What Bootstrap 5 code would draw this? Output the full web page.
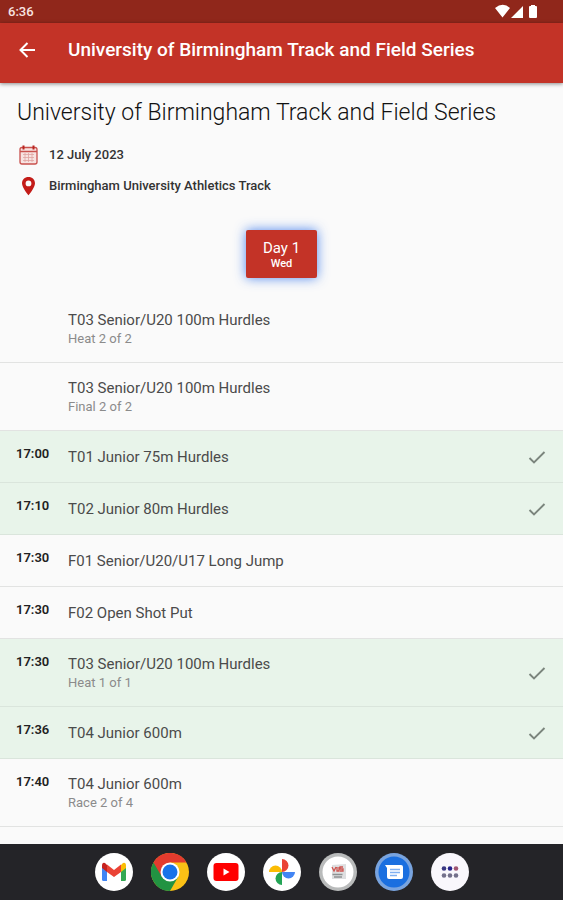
<!DOCTYPE html>
<html lang="en">
<head>
<meta charset="utf-8">
<meta name="viewport" content="width=device-width, initial-scale=1">
<title>University of Birmingham Track and Field Series</title>
<link href="https://cdn.jsdelivr.net/npm/bootstrap@5.3.0/dist/css/bootstrap.min.css" rel="stylesheet">
<style>
body{font-family:Roboto,"Liberation Sans",sans-serif;background:#fafafa;color:#212121}
.status{background:#90271b;height:23px;font-size:13px;font-weight:500;color:#f8e4e1;padding:2px 24px 0 8px}
.appbar{background:#c33327;height:60px;padding:0 16px 6px 16px;box-shadow:0 1px 4px rgba(0,0,0,.45)}
.back{width:52px;height:32px;padding:0 0 0 2px;color:#fff;text-align:left;line-height:0}
.bar-title{font-size:19px;line-height:24px;font-weight:500;color:#fff}
.intro{padding:16px 17px 0}
.event-title{font-size:23px;line-height:28px;font-weight:300;margin:0 0 12px;color:#111}
.fact{height:31px;font-size:13px;font-weight:500;gap:10px;color:#333}
.fact svg{width:22px;height:22px}
.day{width:71px;height:48px;border-radius:2px;background:#c33327;color:#fff;box-shadow:0 0 12px rgba(50,115,235,.85);font-size:15px;line-height:17px;padding:2px 0 0;border:0}
.day small{font-size:11px;line-height:14px;font-weight:500}
.day-strip{padding:29px 0 17px}
.event{min-height:52px;padding:0 16px;border-bottom:1px solid #e2e3e2;background:#fafafa}
.event.two{min-height:68px}
.event.done{background:#e8f4ea;border-color:#dae5dc}
.time{width:52px;font-size:13px;line-height:16px;font-weight:600;padding-top:15px}
.name{font-size:15px;line-height:20px;color:#4b4b4b}
.phase{font-size:13px;line-height:18px;color:#8b8b8b}
.tick{width:20px;height:20px;color:#7b857d}
.dock{background:#242428;height:56px;gap:18px}
.app{width:38px;height:38px;line-height:0}
.app svg{width:38px;height:38px}
</style>
<script src="https://cdn.jsdelivr.net/npm/bootstrap@5.3.0/dist/js/bootstrap.bundle.min.js"></script>
</head>
<body>
<svg class="d-none"><symbol id="check" viewBox="0 0 20 20"><path d="M2.500 11l4.500 4.500L17.500 5" fill="none" stroke="currentColor" stroke-width="1.900"/></symbol></svg>
<div class="d-flex flex-column min-vh-100">
<header>
<div class="status d-flex justify-content-between"><span>6:36</span>
<svg width="44" height="18" viewBox="0 0 44 18" fill="#fff" aria-hidden="true"><path d="M0 6Q8-.5 15 6L7.500 15.500zM28 4v12H16zM34 5q0-1 1-1h1V3h4v1h1q1 0 1 1v10q0 1-1 1h-6q-1 0-1-1z"/></svg></div>
<nav class="appbar d-flex align-items-center">
<button class="btn back border-0" aria-label="Back"><svg width="18" height="18" viewBox="0 0 18 18" fill="none" stroke="#fff" stroke-width="2"><path d="M17 9H3M9.500 2L2.500 9l7 7"/></svg></button>
<div class="bar-title">University of Birmingham Track and Field Series</div>
</nav>
</header>
<main class="flex-grow-1">
<section class="intro">
<h1 class="event-title">University of Birmingham Track and Field Series</h1>
<div class="fact d-flex align-items-center"><svg viewBox="0 0 22 22" fill="none" stroke="#c9524e" aria-hidden="true"><rect x="3" y="3.500" width="17" height="16.500" rx="2" fill="#f7e3e1" stroke-width="1.300"/><path d="M3 7.500h17" stroke-width="1.500"/><path d="M6.500 1.500v4M16.500 1.500v4" stroke="#b92520" stroke-width="2"/><path d="M6 10.500h11M6 13.500h11M6 16.500h11M8 9v9M11.500 9v9M15 9v9" stroke="#dfa5a1" stroke-width=".8"/></svg><span>12 July 2023</span></div>
<div class="fact d-flex align-items-center"><svg viewBox="0 0 22 22" aria-hidden="true"><path fill="#c31c18" fill-rule="evenodd" d="M11.500 2C7.700 2 5 4.700 5 8.300c0 4.500 6.500 12 6.500 12S18 12.800 18 8.300C18 4.700 15.300 2 11.500 2zm0 3.500a2.900 2.900 0 1 1 0 5.800 2.900 2.900 0 0 1 0-5.800z"/></svg><span>Birmingham University Athletics Track</span></div>
</section>
<div class="day-strip d-flex justify-content-center"><button class="btn day d-flex flex-column align-items-center justify-content-center">Day 1<small>Wed</small></button></div>
<section>
<div class="event two d-flex"><div class="time"></div><div class="align-self-center flex-grow-1"><div class="name">T03 Senior/U20 100m Hurdles</div><div class="phase">Heat 2 of 2</div></div></div>
<div class="event two d-flex"><div class="time"></div><div class="align-self-center flex-grow-1"><div class="name">T03 Senior/U20 100m Hurdles</div><div class="phase">Final 2 of 2</div></div></div>
<div class="event done d-flex"><div class="time">17:00</div><div class="align-self-center flex-grow-1"><div class="name">T01 Junior 75m Hurdles</div></div><svg class="tick align-self-center" role="img" aria-label="Done"><use href="#check"/></svg></div>
<div class="event done d-flex"><div class="time">17:10</div><div class="align-self-center flex-grow-1"><div class="name">T02 Junior 80m Hurdles</div></div><svg class="tick align-self-center" role="img" aria-label="Done"><use href="#check"/></svg></div>
<div class="event d-flex"><div class="time">17:30</div><div class="align-self-center flex-grow-1"><div class="name">F01 Senior/U20/U17 Long Jump</div></div></div>
<div class="event d-flex"><div class="time">17:30</div><div class="align-self-center flex-grow-1"><div class="name">F02 Open Shot Put</div></div></div>
<div class="event two done d-flex"><div class="time">17:30</div><div class="align-self-center flex-grow-1"><div class="name">T03 Senior/U20 100m Hurdles</div><div class="phase">Heat 1 of 1</div></div><svg class="tick align-self-center" role="img" aria-label="Done"><use href="#check"/></svg></div>
<div class="event done d-flex"><div class="time">17:36</div><div class="align-self-center flex-grow-1"><div class="name">T04 Junior 600m</div></div><svg class="tick align-self-center" role="img" aria-label="Done"><use href="#check"/></svg></div>
<div class="event two d-flex"><div class="time">17:40</div><div class="align-self-center flex-grow-1"><div class="name">T04 Junior 600m</div><div class="phase">Race 2 of 4</div></div></div>
</section>
</main>
<footer class="dock d-flex justify-content-center align-items-center">
<a class="app" href="#" aria-label="Gmail"><svg viewBox="0 0 38 38"><circle cx="19" cy="19" r="19" fill="#fff"/><path fill="#4285f4" d="M7 14l5 4v10H8.500Q7 28 7 26.500z"/><path fill="#34a853" d="M31 14l-5 4v10h3.500Q31 28 31 26.500z"/><path fill="#fbbc04" d="M26 12l2-2q3-1 3 3v2l-5 4z"/><path fill="#c5221f" d="M12 12l-2-2q-3-1-3 3v2l5 4z"/><path fill="#ea4335" d="M12 11.500l7 5.500 7-5.500V19l-7 5-7-5z"/></svg></a>
<a class="app" href="#" aria-label="Chrome"><svg viewBox="0 0 38 38"><circle cx="19" cy="19" r="19" fill="#fbc116"/><path fill="#229342" d="M2.500 9.500A19 19 0 0 0 19 38l8.200-14.200L19 19z"/><path fill="#e33b2e" d="M2.500 9.500A19 19 0 0 1 35.500 9.500H19v9.500l-8.200 4.700z"/><circle cx="19" cy="19" r="9.500" fill="#fff"/><circle cx="19" cy="19" r="7.500" fill="#1a73e8"/></svg></a>
<a class="app" href="#" aria-label="YouTube"><svg viewBox="0 0 38 38"><circle cx="19" cy="19" r="19" fill="#fff"/><rect x="6.500" y="10" width="25" height="18" rx="3" fill="#f00"/><path d="M16.500 15.500v7l6-3.500z" fill="#fff"/></svg></a>
<a class="app" href="#" aria-label="Photos"><svg viewBox="0 0 38 38"><circle cx="19" cy="19" r="19" fill="#fff"/><path fill="#ea4335" d="M19 6a6.500 6.500 0 0 1 0 13z"/><path fill="#4285f4" d="M32 19a6.500 6.500 0 0 1-13 0z"/><path fill="#23a455" d="M19 32a6.500 6.500 0 0 1 0-13z"/><path fill="#fbbc04" d="M6 19a6.500 6.500 0 0 1 13 0z"/></svg></a>
<a class="app" href="#" aria-label="News"><svg viewBox="0 0 38 38"><circle cx="19" cy="19" r="19" fill="#b9bbbb"/><circle cx="19" cy="19" r="15.500" fill="#fff"/><path fill="#dedfe0" d="M13 12l14-1v15H13z"/><path d="M13 14l2 4 2-4m1 0v4h2v-4m4 0h-3v2h3v2h-3" fill="none" stroke="#cf5550" stroke-width="1.300"/><path d="M13.500 21.500h10M15 24h8" stroke="#8e9292" stroke-width="1.500"/></svg></a>
<a class="app" href="#" aria-label="Messages"><svg viewBox="0 0 38 38"><circle cx="19" cy="19" r="19" fill="#79a4df"/><circle cx="19" cy="19" r="15.500" fill="#1a6fe0"/><path fill="#fff" d="M10 12h16q2 0 2 2v10q0 2-2 2H14q-2 0-2-2v-9z"/><path d="M15 16.500h10M15 19.500h10M15 22.500h7" stroke="#7fb0f2" stroke-width="1.300"/></svg></a>
<a class="app" href="#" aria-label="All apps"><svg viewBox="0 0 38 38"><circle cx="19" cy="19" r="19" fill="#f9f7fc"/><g fill="#73708b"><circle cx="13" cy="15.500" r="2.300" fill="#393782"/><circle cx="19" cy="15.500" r="2.300" fill="#24228c"/><circle cx="25" cy="15.500" r="2.300" fill="#a05572"/><circle cx="13" cy="22.500" r="2.300"/><circle cx="19" cy="22.500" r="2.300"/><circle cx="25" cy="22.500" r="2.300"/></g></svg></a>
</footer>
</div>
</body>
</html>
